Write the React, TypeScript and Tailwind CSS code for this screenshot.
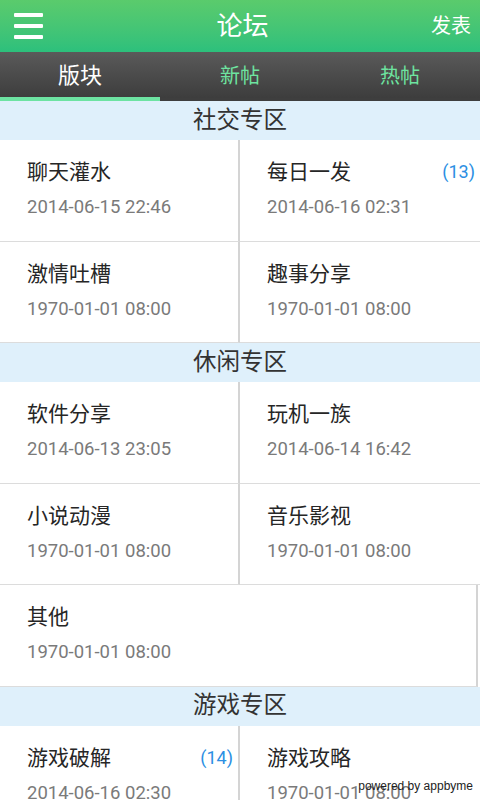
import React from 'react';

type Board = { name: string; time: string; count?: number; full?: boolean };
type Section = { title: string; boards: Board[] };

const sections: Section[] = [
  {
    title: '社交专区',
    boards: [
      { name: '聊天灌水', time: '2014-06-15 22:46' },
      { name: '每日一发', time: '2014-06-16 02:31', count: 13 },
      { name: '激情吐槽', time: '1970-01-01 08:00' },
      { name: '趣事分享', time: '1970-01-01 08:00' },
    ],
  },
  {
    title: '休闲专区',
    boards: [
      { name: '软件分享', time: '2014-06-13 23:05' },
      { name: '玩机一族', time: '2014-06-14 16:42' },
      { name: '小说动漫', time: '1970-01-01 08:00' },
      { name: '音乐影视', time: '1970-01-01 08:00' },
      { name: '其他', time: '1970-01-01 08:00', full: true },
    ],
  },
  {
    title: '游戏专区',
    boards: [
      { name: '游戏破解', time: '2014-06-16 02:30', count: 14 },
      { name: '游戏攻略', time: '1970-01-01 08:00' },
    ],
  },
];

const font = { fontFamily: 'Roboto, "Noto Sans CJK SC", sans-serif' };

function BoardCell({ board, left }: { board: Board; left: boolean }) {
  return (
    <div
      className={`relative h-[101.5px] border-b border-[#dcdcdc] bg-white pl-[27px] pt-[18px] ${
        left || board.full ? 'border-r-2 border-r-[#d4d4d4]' : ''
      } ${board.full ? 'col-span-2 mr-[2px]' : ''}`}
    >
      <div className="flex items-center justify-between pr-[5px]">
        <span className="text-[21px] leading-[28px] text-[#262626]">{board.name}</span>
        {board.count !== undefined && (
          <span className="text-[18px] leading-[28px] text-[#2b8fe3]">({board.count})</span>
        )}
      </div>
      <div className="mt-[10px] text-[18.5px] leading-[22px] text-[#7a7a7a]">{board.time}</div>
    </div>
  );
}

export default function App() {
  return (
    <div className="relative h-[800px] w-[480px] overflow-hidden bg-white" style={font}>
      {/* 顶部栏 */}
      <div className="grid h-[52px] grid-cols-3 items-center bg-gradient-to-b from-[#5acb6c] to-[#2cc07c] pl-[14px] pr-[9px]">
        <div className="flex w-[29px] flex-col gap-[7px]">
          <div className="h-[4px] w-[29px] rounded-[1px] bg-white" />
          <div className="h-[4px] w-[29px] rounded-[1px] bg-white" />
          <div className="h-[4px] w-[29px] rounded-[1px] bg-white" />
        </div>
        <span className="text-center text-[26px] text-white">论坛</span>
        <span className="text-right text-[20px] text-white">发表</span>
      </div>

      {/* 标签栏 */}
      <div className="flex h-[49px] border-b-[3px] border-[#3e3e3e] bg-gradient-to-b from-[#5a5a5a] to-[#3d3d3d] pt-[1px]">
        <div className="relative flex w-[160px] items-center justify-center">
          <span className="text-[22px] text-white">版块</span>
          <div className="absolute bottom-[-3px] left-0 h-[4px] w-[160px] bg-[#6de3a2]" />
        </div>
        <div className="flex w-[160px] items-center justify-center">
          <span className="text-[20px] text-[#6ee4a0]">新帖</span>
        </div>
        <div className="flex w-[160px] items-center justify-center">
          <span className="text-[20px] text-[#6ee4a0]">热帖</span>
        </div>
      </div>

      {sections.map((s) => (
        <div key={s.title}>
          <div className="flex h-[39px] items-center justify-center bg-[#dff0fb] text-[23.5px] text-[#333]">
            {s.title}
          </div>
          <div className="grid grid-cols-2">
            {s.boards.map((b, i) => (
              <BoardCell key={b.name} board={b} left={i % 2 === 0} />
            ))}
          </div>
        </div>
      ))}

      <div className="absolute bottom-[8px] right-[7px] text-[12px] leading-none text-[#222]" style={{ fontFamily: '"Liberation Sans", sans-serif' }}>
        powered by appbyme
      </div>
    </div>
  );
}
